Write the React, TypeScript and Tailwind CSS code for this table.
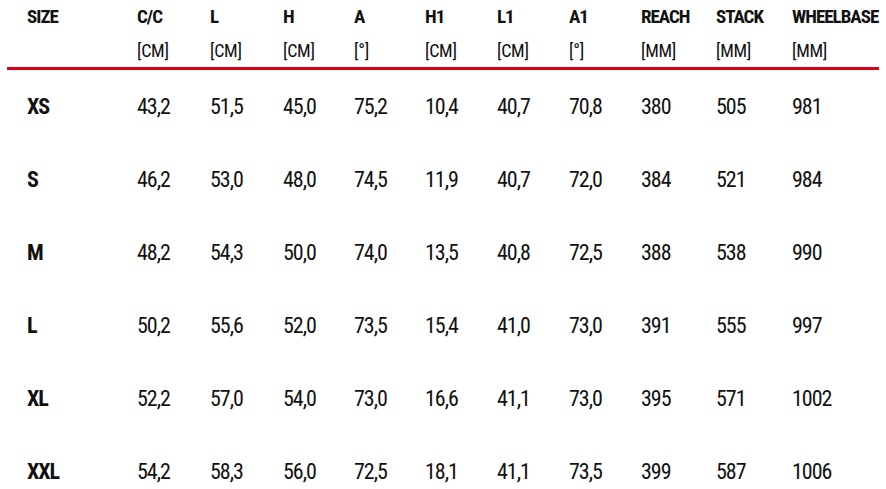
import React from "react";

const cols = [
  { t: "SIZE", u: "" },
  { t: "C/C", u: "[CM]" },
  { t: "L", u: "[CM]" },
  { t: "H", u: "[CM]" },
  { t: "A", u: "[°]" },
  { t: "H1", u: "[CM]" },
  { t: "L1", u: "[CM]" },
  { t: "A1", u: "[°]" },
  { t: "REACH", u: "[MM]" },
  { t: "STACK", u: "[MM]" },
  { t: "WHEELBASE", u: "[MM]" },
];

const rows = [
  ["XS", "43,2", "51,5", "45,0", "75,2", "10,4", "40,7", "70,8", "380", "505", "981"],
  ["S", "46,2", "53,0", "48,0", "74,5", "11,9", "40,7", "72,0", "384", "521", "984"],
  ["M", "48,2", "54,3", "50,0", "74,0", "13,5", "40,8", "72,5", "388", "538", "990"],
  ["L", "50,2", "55,6", "52,0", "73,5", "15,4", "41,0", "73,0", "391", "555", "997"],
  ["XL", "52,2", "57,0", "54,0", "73,0", "16,6", "41,1", "73,0", "395", "571", "1002"],
  ["XXL", "54,2", "58,3", "56,0", "72,5", "18,1", "41,1", "73,5", "399", "587", "1006"],
];

const grid = "grid grid-cols-[130px_73px_73px_71px_71px_72px_72px_72px_75px_76px_1fr]";
const font = { fontFamily: '"Roboto Condensed", "DejaVu Sans Condensed", "Liberation Sans Narrow", Roboto, sans-serif', fontStretch: "condensed" } as React.CSSProperties;

export default function App() {
  return (
    <div className="w-[886px] h-[489px] overflow-hidden bg-white text-[#111111] px-[7px]" style={font}>
      <div className={grid + " h-[34px] items-center text-[19px] font-bold tracking-[-1px]"}>
        {cols.map((c, i) => (
          <div key={i} className={i === 0 ? "pl-[20px]" : ""}>{c.t}</div>
        ))}
      </div>
      <div className={grid + " h-[32px] items-center text-[18px] tracking-[-0.3px]"}>
        {cols.map((c, i) => (
          <div key={i} className={i === 0 ? "pl-[20px]" : ""}>{c.u}</div>
        ))}
      </div>
      <div className="h-[3px] bg-[#d9021c] mt-[1px]" />
      {rows.map((r, ri) => (
        <div key={ri} className={grid + " h-[73px] items-center text-[22px] tracking-[-1px]"}>
          {r.map((v, i) => (
            <div key={i} className={i === 0 ? "pl-[20px] font-bold" : ""}>{v}</div>
          ))}
        </div>
      ))}
    </div>
  );
}
